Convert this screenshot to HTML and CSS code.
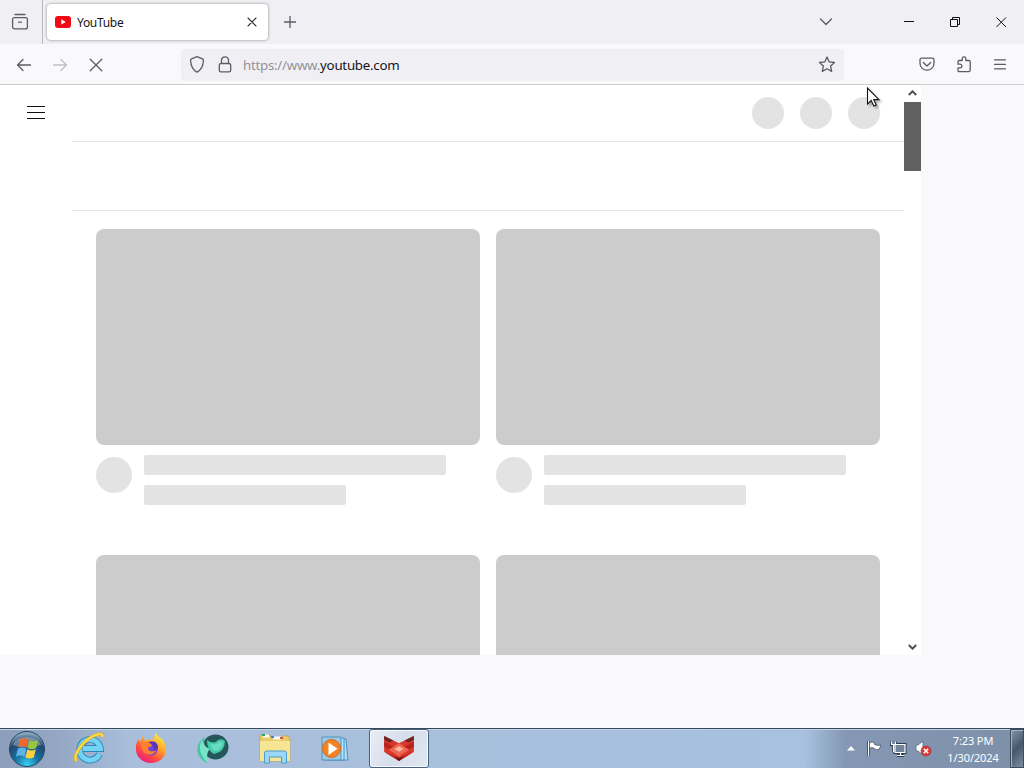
FILE: index.html
```html
<!DOCTYPE html>
<html lang="en">
<head>
  <meta charset="UTF-8">
  <title>YouTube</title>
  <link rel="stylesheet" href="styles.css">
</head>
<body>
  <div class="tabbar">
    <div class="firefox-view">
      <svg width="18" height="18" viewBox="0 0 18 18" class="icon"><path d="M4 1.500h10M3.300 4.700h11.400a1.700 1.700 0 0 1 1.700 1.700v7.500a2 2 0 0 1-2 2H3.600a2 2 0 0 1-2-2V6.400a1.700 1.700 0 0 1 1.700-1.700M7.600 9.200h2.800"/></svg>
    </div>
    <div class="tab">
      <svg width="16" height="12" viewBox="0 0 16 12"><rect width="16" height="12" rx="3" fill="#f00a14"/><path d="M6.300 3.300v5.200L10.800 6z" fill="#fff"/></svg>
      <span class="tab-title">YouTube</span>
      <svg width="10" height="10" viewBox="0 0 10 10" class="icon dark"><path d="M1 1l8 8M9 1L1 9"/></svg>
    </div>
    <svg width="12" height="12" viewBox="0 0 12 12" class="icon new-tab"><path d="M6 .5v11M.5 6h11"/></svg>
    <svg width="14" height="8" viewBox="0 0 14 8" class="icon all-tabs"><path d="M1.500 1L7 6.500 12.500 1"/></svg>
    <div class="window-buttons">
      <svg width="11" height="11" viewBox="0 0 11 11"><path d="M0 4.500h10"/></svg>
      <svg width="11" height="11" viewBox="0 0 11 11"><path d="M.5 2.500h7v7h-7zM2.500 2.500v-2h7v7h-2"/></svg>
      <svg width="11" height="11" viewBox="0 0 11 11"><path d="M.5.500l9.500 9.500M10 .5L.5 10"/></svg>
    </div>
  </div>

  <div class="toolbar">
    <div class="nav-buttons">
      <svg width="16" height="16" viewBox="0 0 16 16" class="icon"><path d="M14.500 8h-13M7 2.500L1.500 8 7 13.500"/></svg>
      <svg width="16" height="16" viewBox="0 0 16 16" class="icon disabled"><path d="M1.500 8h13M9 2.500L14.500 8 9 13.500"/></svg>
      <svg width="16" height="16" viewBox="0 0 16 16" class="icon"><path d="M2.200 2.200l11.600 11.600M13.800 2.200L2.200 13.800"/></svg>
    </div>
    <div class="urlbar">
      <svg width="16" height="18" viewBox="0 0 16 18" class="icon"><path d="M8 .7l5.500 2.200c.8.300 1 .8.900 1.600-.2 5-1.900 9.300-6.400 11.600C3.500 13.800 1.800 9.500 1.600 4.500c0-.8.200-1.300.9-1.600z"/></svg>
      <svg width="14" height="18" viewBox="0 0 14 18" class="icon"><path d="M3.500 7.500V4.300a3.500 3.500 0 0 1 7 0v3.200M3 7.500h8a1.700 1.700 0 0 1 1.700 1.700v5a1.700 1.700 0 0 1-1.700 1.700H3a1.700 1.700 0 0 1-1.700-1.700v-5A1.700 1.700 0 0 1 3 7.500z"/></svg>
      <span class="url">https://www.<b>youtube.com</b></span>
      <svg width="18" height="18" viewBox="0 0 18 18" class="icon star"><path d="M9 1l2.200 4.900 5.300.6-3.900 3.600 1.100 5.300L9 12.800l-4.700 2.600 1.100-5.300L1.500 6.500l5.300-.6z"/></svg>
    </div>
    <div class="toolbar-end">
      <svg width="16" height="16" viewBox="0 0 16 16" class="icon"><path d="M2.600 1.200h10.800A1.600 1.600 0 0 1 15 2.800v3.400a7 7 0 0 1-14 0V2.800a1.600 1.600 0 0 1 1.600-1.600zM4.300 5.500L8 9l3.700-3.500"/></svg>
      <svg width="16" height="18" viewBox="0 0 16 18" class="icon"><path d="M2 7.500V5.700c0-.7.500-1.200 1.200-1.200h3V2.700a1.800 1.800 0 0 1 3.600 0v1.800h3c.8 0 1.400.6 1.400 1.400v8.400c0 .8-.6 1.400-1.400 1.400H3.200c-.7 0-1.200-.5-1.200-1.200v-2.600h2a1.700 1.700 0 0 0 0-3.700H2z"/></svg>
      <svg width="14" height="12" viewBox="0 0 14 12" class="icon"><path d="M1.500 .8h11M1.500 5.300h11M1.500 9.800h11"/></svg>
    </div>
  </div>

  <div class="viewport">
    <div class="page">
      <div class="guide">
        <svg width="18" height="14" viewBox="0 0 18 14"><path d="M0 .5h18M0 6.500h18M0 12.500h18" stroke="#0f0f0f"/></svg>
      </div>
      <div class="content">
        <div class="masthead">
          <span class="circle"></span>
          <span class="circle"></span>
          <span class="circle"></span>
        </div>
        <div class="chips"></div>
        <div class="grid">
          <div class="video">
            <div class="thumb"></div>
            <div class="details">
              <div class="avatar"></div>
              <div class="lines"><div class="line"></div><div class="line short"></div></div>
            </div>
          </div>
          <div class="video">
            <div class="thumb"></div>
            <div class="details">
              <div class="avatar"></div>
              <div class="lines"><div class="line"></div><div class="line short"></div></div>
            </div>
          </div>
          <div class="video"><div class="thumb"></div></div>
          <div class="video"><div class="thumb"></div></div>
        </div>
      </div>
      <div class="scrollbar">
        <svg width="9" height="7" viewBox="0 0 9 7"><path d="M.8 5l3.700-3.700L8.200 5"/></svg>
        <div class="thumb-bar"></div>
        <svg width="9" height="7" viewBox="0 0 9 7"><path d="M.8 2l3.700 3.700L8.200 2"/></svg>
      </div>
    </div>
  </div>

  <div class="taskbar">
    <!-- start orb -->
    <svg class="start" width="38" height="38" viewBox="0 0 38 38">
      <defs>
        <radialGradient id="orb" cx=".5" cy=".95" r=".9"><stop offset="0" stop-color="#35d3f6"/><stop offset=".4" stop-color="#176d9e"/><stop offset=".75" stop-color="#23496f"/><stop offset="1" stop-color="#8aa8bd"/></radialGradient>
      </defs>
      <circle cx="19" cy="19" r="17.500" fill="url(#orb)" stroke="#274865"/>
      <path d="M5 15a15 12 0 0 1 28 0q-14 5-28 0z" fill="#fff" opacity=".3"/>
      <path d="M12 9.500q4.500-2.500 8.500 0l-1.900 8q-4-2.500-8.500 0z" fill="#ee682c"/>
      <path d="M21.500 10q4.500 2.500 8.500 0l-1.900 8q-4 2.500-8.500 0z" fill="#96c83c"/>
      <path d="M9.800 18.800q4.500-2.500 8.500 0l-1.900 8q-4-2.500-8.500 0z" fill="#5ab4ea"/>
      <path d="M19.300 19.300q4.500 2.500 8.500 0l-1.900 8q-4 2.500-8.500 0z" fill="#fbd044"/>
    </svg>
    <!-- internet explorer -->
    <svg class="app" width="34" height="34" viewBox="0 0 34 34">
      <path d="M27.500 23A10.300 10.300 0 1 1 28.300 17.500H11" fill="none" stroke="#2e86ba" stroke-width="6.800"/>
      <path d="M27.500 23A10.300 10.300 0 1 1 28.300 17.500H11" fill="none" stroke="#72d3f5" stroke-width="5"/>
      <path d="M4.500 30.500C0 24 13 6 27 3.200c3-.5 4.200.8 3 3" fill="none" stroke="#d9a520" stroke-width="3.400"/>
      <path d="M4.500 30C0 24 13 6 27 3.200c3-.5 4.200.8 3 3" fill="none" stroke="#fbd94a" stroke-width="2.200"/>
    </svg>
    <!-- firefox -->
    <svg class="app" width="34" height="34" viewBox="0 0 34 34">
      <defs><linearGradient id="fx" x1=".85" y1=".05" x2=".25" y2=".95"><stop offset="0" stop-color="#fff04a"/><stop offset=".4" stop-color="#ffa229"/><stop offset=".7" stop-color="#ff5040"/><stop offset="1" stop-color="#ed1e79"/></linearGradient></defs>
      <path d="M4.500 8l1.500 3 3-6 2 5q5-3 9-1-.5-4 2-7 2 4 6 6 4 5 4 10.500a15 13.500 0 0 1-30 0Q1.500 12 4.500 8z" fill="url(#fx)"/>
      <circle cx="17" cy="17.500" r="7" fill="#6f45d5"/>
      <path d="M7 14q3-5 9-2 1 1 3 2-1 1.500-4.500 2-1.500 3.500 3 4.500 3 0 5-2-2 5.500-8 5-6.500-1-7.500-9.500z" fill="#ff8030"/>
      <path d="M15 11q8-2.500 9 5-1 3-4 4 1-4-5-9z" fill="#5b36b8"/>
    </svg>
    <!-- green swirl -->
    <svg class="app" width="34" height="34" viewBox="0 0 34 34">
      <ellipse cx="19.500" cy="16" rx="13" ry="12.500" fill="#25565a"/>
      <path d="M9 6Q-1 12 2 23q3 7 10 9-2-4-.5-8-5-10-2.500-18z" fill="#43c5a8"/>
      <path d="M6 9q-5 8 1 17 2 4 5 6-3-10 2-14-6-2-8-9z" fill="#7be3c7"/>
      <path d="M11 9q7 5 11 0 4-2 7 1 0 11-11 13-7-3-7-14z" fill="#46c9ab"/>
      <path d="M14 12q6 3 9-1 3-1 4 1-2 7-8 8-4-2-5-8z" fill="#66dcc0"/>
    </svg>
    <!-- explorer -->
    <svg class="app" width="34" height="32" viewBox="0 0 34 32">
      <path d="M2 5V3h10l2 3h10V4h6l2 3v22H2z" fill="#e9cd69" stroke="#b99c46" stroke-width=".7"/>
      <path d="M5 4h6M15 6h8" stroke="#fff" stroke-width="3"/>
      <path d="M4 3h3" stroke="#2aa65a" stroke-width="2"/><path d="M13 5h3" stroke="#3687ce" stroke-width="2"/><path d="M22 6h3" stroke="#d5563c" stroke-width="2"/>
      <path d="M2 9h30v20H2z" fill="#f6e594"/>
      <path d="M6.500 31V21q0-2 2-2h18q2 0 2 2v10h-5v-6h-12v6z" fill="#9bd8f5" stroke="#4e9ccd"/>
    </svg>
    <!-- media player -->
    <svg class="app" width="34" height="28" viewBox="-1 -1 34 28">
      <path d="M8 4h17l2 21H9z" fill="#a9dcf5" stroke="#4b93c4"/>
      <path d="M4 3h19v22H4z" fill="#b8e2f6" stroke="#4b93c4"/>
      <path d="M1 2h19v23H1z" fill="#9acbe7" stroke="#5690b8"/>
      <circle cx="10.500" cy="13.500" r="9" fill="#f38424" stroke="#d9641b"/>
      <path d="M7.500 7.500v12.500l9-6.300z" fill="#fff"/>
    </svg>
    <div class="app-active">
      <svg width="32" height="26" viewBox="0 0 34 28">
        <path d="M1 1l16 8L33 1v17L17 28 1 18z" fill="#d8372c"/>
        <path d="M1 1l10 5-4 2-6-3zM33 1L23 6l4 2 6-3z" fill="#6b2421"/>
        <path d="M1 7l11 6-5 3-6-3zM33 7l-11 6 5 3 6-3z" fill="#b9231f"/>
        <path d="M6 16l11-7 11 7-11 7z" fill="#ee6550"/>
        <path d="M12 15l5-3 5 3-5 3z" fill="#ffb9a0"/>
        <path d="M1 18l16 7 16-7-16 10z" fill="#b8251f"/>
        <path d="M12 23l5 2 5-2-5 5z" fill="#561514"/>
      </svg>
    </div>
    <div class="tray">
      <svg width="8" height="5" viewBox="0 0 8 5"><path d="M4 0l4 4.500H0z" fill="#fff"/></svg>
      <svg width="17" height="17" viewBox="0 0 17 17"><path d="M2.500 1v15" stroke="#273746" stroke-width="3"/><path d="M2.500 1v15" stroke="#fff" stroke-width="1.300"/><path d="M3.500 2.500q3-1 5 .5v1.500q3 1.500 6.500.5l-2 4.500q-3 1-4.500-1-2-1.500-5-.5z" fill="#fff" stroke="#35485c" stroke-width=".7"/></svg>
      <svg width="18" height="17" viewBox="0 0 18 17"><path d="M5 4.500h10v8H5zM7 15.500h7M10.500 12v3M1.500 1.500v3h4v-3M3.500 5v7" fill="none" stroke="#283b4e" stroke-width="3"/><path d="M5 4.500h10v8H5zM7 15.500h7M10.500 12v3M1.500 1.500v3h4v-3M3.500 5v7" fill="#70849b" stroke="#fff" stroke-width="1.200"/></svg>
      <svg width="18" height="17" viewBox="0 0 18 17"><path d="M1 5h2l5-4v14l-5-4H1z" fill="#fff" stroke="#697b8f"/><circle cx="11" cy="11" r="5" fill="#d93832" stroke="#a72a2a" stroke-width=".6"/><path d="M8.800 8.800l4.400 4.400M13.200 8.800l-4.400 4.400" stroke="#fff" stroke-width="1.600"/></svg>
    </div>
    <div class="clock"><span>7:23 PM</span><span>1/30/2024</span></div>
    <div class="show-desktop"></div>
  </div>

  <svg class="cursor" width="18" height="24" viewBox="0 0 18 24"><path d="M1.500 1v16l3.700-3.500 2.600 5.500 2.400-1.100-2.500-5.300h5.200z" fill="#fff" stroke="#151515" stroke-width="1.100"/></svg>
</body>
</html>
```

FILE: styles.css
```css
* {
  box-sizing: border-box;
}
body {
  margin: 0;
  width: 1024px;
  height: 768px;
  overflow: hidden;
  display: flex;
  flex-direction: column;
  background: #f9f9fb;
  font-family: "Noto Sans", "Open Sans", sans-serif;
}
svg {
  display: block;
  flex-shrink: 0;
}
.icon {
  fill: none;
  stroke: #5b5b66;
  stroke-width: 1.3;
  stroke-linecap: round;
  stroke-linejoin: round;
}
.icon.dark {
  stroke: #333;
  stroke-width: 1.1;
}
.icon.disabled {
  stroke: #c0c0c6;
}

/* tab strip */
.tabbar {
  height: 44px;
  display: flex;
  align-items: center;
  background: #f0f0f4;
}
.firefox-view {
  width: 43px;
  height: 44px;
  padding: 13px 0 0 11px;
  border-right: 1px solid #b9b9c1;
}
.tab {
  width: 221px;
  height: 36px;
  margin-left: 4px;
  padding: 0 11px 0 8px;
  display: flex;
  align-items: center;
  background: #fff;
  border-radius: 4px;
  box-shadow: 0 0 3px rgba(0, 0, 0, 0.45);
}
.tab-title {
  flex: 1;
  margin-left: 6px;
  font-size: 12px;
  letter-spacing: -0.3px;
  color: #15141a;
}
.new-tab {
  margin-left: 16px;
}
.all-tabs {
  margin: 0 71px 0 auto;
}
.window-buttons {
  display: flex;
  gap: 35px;
  margin-right: 17px;
}
.window-buttons path {
  fill: none;
  stroke: #111;
}

/* navigation toolbar */
.toolbar {
  height: 41px;
  padding-top: 1px;
  display: flex;
  align-items: center;
  background: #f9f9fb;
  border-bottom: 1px solid #cccccf;
}
.nav-buttons {
  width: 181px;
  padding-left: 16px;
  display: flex;
  gap: 20px;
}
.urlbar {
  width: 663px;
  height: 32px;
  padding: 0 8px;
  display: flex;
  align-items: center;
  background: #f0f0f4;
  border-radius: 4px;
}
.urlbar svg + svg {
  margin-left: 13px;
}
.url {
  margin-left: 11px;
  padding-top: 1px;
  font-size: 13.3px;
  letter-spacing: -0.26px;
  color: #929299;
}
.url b {
  font-weight: normal;
  color: #15141a;
}
.urlbar .star {
  margin-left: auto;
}
.toolbar-end {
  flex: 1;
  padding-right: 17px;
  display: flex;
  justify-content: flex-end;
  align-items: center;
  gap: 21px;
}

/* page */
.viewport {
  height: 643px;
}
.page {
  width: 921px;
  height: 570px;
  display: flex;
  overflow: hidden;
  background: #fff;
}
.guide {
  width: 72px;
  padding: 21px 0 0 27px;
}
.content {
  width: 832px;
}
.masthead {
  height: 57px;
  padding: 12px 24px 0 0;
  display: flex;
  justify-content: flex-end;
  gap: 16px;
  border-bottom: 1px solid #e5e5e5;
}
.circle {
  width: 32px;
  height: 32px;
  border-radius: 50%;
  background: #e3e3e3;
}
.chips {
  height: 69px;
  border-bottom: 1px solid #e5e5e5;
}
.grid {
  display: grid;
  grid-template-columns: 384px 384px;
  gap: 50px 16px;
  padding: 18px 24px 0;
}
.thumb {
  height: 216px;
  border-radius: 8px;
  background: #ccc;
}
.details {
  height: 60px;
  display: flex;
}
.avatar {
  width: 36px;
  height: 36px;
  margin: 12px 12px 0 0;
  border-radius: 50%;
  background: #e3e3e3;
}
.lines {
  padding-top: 10px;
}
.line {
  width: 302px;
  height: 20px;
  margin-bottom: 10px;
  border-radius: 2px;
  background: #e3e3e3;
}
.line.short {
  width: 202px;
}
.scrollbar {
  width: 17px;
  padding: 5px 0 5px;
  display: flex;
  flex-direction: column;
  align-items: center;
}
.scrollbar path {
  fill: none;
  stroke: #505050;
  stroke-width: 2;
}
.thumb-bar {
  width: 17px;
  height: 69px;
  margin: 5px 0 auto;
  background: #606060;
}

/* taskbar */
.taskbar {
  height: 40px;
  display: flex;
  align-items: center;
  background: linear-gradient(90deg, #8c9eb9 0, #94a8c5 60px, #a9bedb 130px, #a7c1de 805px, #8498b5 845px, #7d90a9 100%);
  border-top: 1px solid #34495c;
  box-shadow: inset 0 1px #c6d6e6;
}
.start {
  margin-left: 8px;
}
.app {
  width: 34px;
  margin: 0 13px 2px 15px;
}
.start + .app {
  margin-left: 26px;
}
.app + .app {
  margin-left: 15px;
}
.app-active {
  width: 60px;
  height: 39px;
  margin-left: 2px;
  padding-bottom: 2px;
  display: flex;
  align-items: center;
  justify-content: center;
  background: linear-gradient(120deg, #e8edf5, #d5deeb 50%, #dfe7f2);
  border: 1px solid #48617c;
  border-radius: 3px;
  box-shadow: inset 0 0 0 1px #f5f8fc;
}
.tray {
  margin-left: auto;
  display: flex;
  align-items: center;
  gap: 7px;
}
.tray svg:first-child {
  margin-right: 4px;
}
.clock {
  width: 77px;
  padding-left: 3px;
  display: flex;
  flex-direction: column;
  align-items: center;
  font-size: 11px;
  line-height: 17px;
  letter-spacing: -0.1px;
  color: #fff;
}
.show-desktop {
  width: 14px;
  height: 39px;
  background: linear-gradient(135deg, #8795a8, #48566b 50%, #7d8da3);
  border: 1px solid #3c4c60;
  box-shadow: inset 1px 1px #a5b2c2;
}

.cursor {
  position: absolute;
  left: 866px;
  top: 87px;
  filter: drop-shadow(2px 2px 1px rgba(0, 0, 0, 0.3));
}
```
